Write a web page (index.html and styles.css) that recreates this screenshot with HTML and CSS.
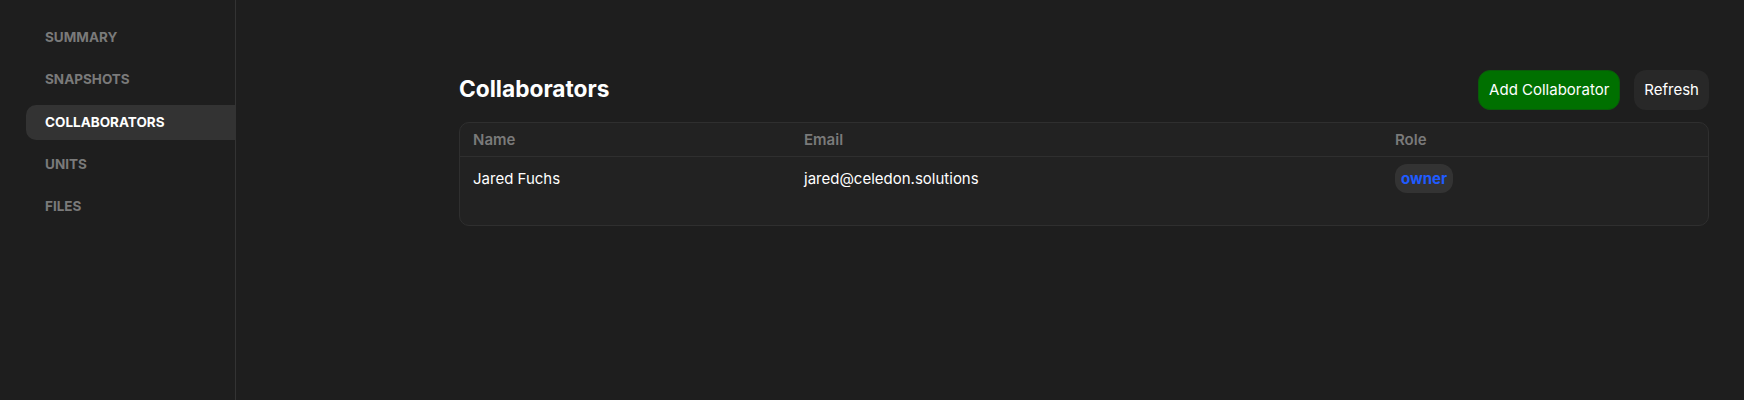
FILE: index.html
```html
<!DOCTYPE html>
<html lang="en">
<head>
<meta charset="utf-8">
<title>Collaborators</title>
<link rel="stylesheet" href="styles.css">
</head>
<body>
<div class="app">
  <nav class="sidebar">
    <a class="nav-item">SUMMARY</a>
    <a class="nav-item">SNAPSHOTS</a>
    <a class="nav-item active">COLLABORATORS</a>
    <a class="nav-item">UNITS</a>
    <a class="nav-item">FILES</a>
  </nav>
  <main class="main">
    <div class="header">
      <h1 class="title">Collaborators</h1>
      <div class="actions">
        <button class="btn btn-primary">Add Collaborator</button>
        <button class="btn btn-secondary">Refresh</button>
      </div>
    </div>
    <div class="table">
      <div class="row head">
        <div class="cell">Name</div>
        <div class="cell">Email</div>
        <div class="cell">Role</div>
      </div>
      <div class="row body">
        <div class="cell">Jared Fuchs</div>
        <div class="cell">jared@celedon.solutions</div>
        <div class="cell"><span class="badge">owner</span></div>
      </div>
    </div>
  </main>
</div>
</body>
</html>
```
FILE: styles.css
```css
* { box-sizing: border-box; }
html, body { margin: 0; height: 100%; }
body {
  background: #1e1e1e;
  color: #ffffff;
  font-family: Inter, "Noto Sans", sans-serif;
}
.app {
  display: flex;
  min-height: 400px;
}
.sidebar {
  width: 236px;
  flex: none;
  border-right: 1px solid #333333;
  padding: 20px 0 0 26px;
  display: flex;
  flex-direction: column;
  gap: 7.3px;
}
.nav-item {
  display: block;
  height: 35px;
  line-height: 35px;
  padding-left: 19px;
  font-size: 13.5px;
  font-weight: 700;
  color: #7a7a7a;
  border-radius: 10px 0 0 10px;
}
.nav-item.active {
  background: #333333;
  color: #ffffff;
}
.main {
  flex: 1;
  padding: 69px 35px 0 223px;
}
.header {
  display: flex;
  align-items: center;
  justify-content: space-between;
  height: 41px;
  margin-bottom: 12px;
}
.title {
  margin: 0 0 3px;
  font-size: 22.7px;
  font-weight: 700;
  color: #ffffff;
}
.actions {
  display: flex;
  gap: 14px;
}
.btn {
  height: 40px;
  border: none;
  border-radius: 12px;
  font-family: inherit;
  font-size: 15px;
  color: #ffffff;
  padding: 0 10px;
  white-space: nowrap;
}
.btn-primary {
  background: #007000;
  border: 1px solid #0a5a0a;
}
.btn-secondary {
  background: #282828;
}
.table {
  background: #222222;
  border: 1px solid #2f2f2f;
  border-radius: 10px;
  height: 104px;
}
.row {
  display: grid;
  grid-template-columns: 331px 591px 1fr;
}
.row.head {
  height: 34px;
  align-items: center;
  border-bottom: 1px solid #2f2f2f;
}
.row.head .cell {
  color: #7a7a7a;
  font-weight: 600;
  font-size: 15px;
}
.row.body {
  padding-top: 7px;
  align-items: center;
  font-size: 15px;
}
.cell {
  padding-left: 13px;
}
.badge {
  display: inline-block;
  height: 29px;
  line-height: 29px;
  padding: 0 6px;
  border-radius: 12px;
  background: #333333;
  color: #1f5bff;
  font-weight: 700;
  font-size: 15px;
}
```
